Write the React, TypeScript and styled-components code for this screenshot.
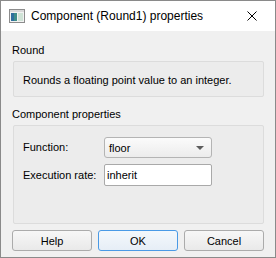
import React from 'react';
import styled, { createGlobalStyle } from 'styled-components';

const GlobalStyle = createGlobalStyle`
  html, body {
    margin: 0;
    padding: 0;
    background: #ffffff;
  }
  body {
    font-family: "Liberation Sans", Arial, sans-serif;
    font-size: 11px;
    color: #000;
  }
`;

const Window = styled.div`
  width: 276px;
  height: 258px;
  box-sizing: border-box;
  border: 1px solid #8a8a8a;
  background: #f0f0f0;
  display: flex;
  flex-direction: column;
`;

const TitleBar = styled.div`
  height: 30px;
  background: #ffffff;
  display: flex;
  align-items: center;
  padding-left: 8px;
  flex-shrink: 0;
`;

const Title = styled.span`
  margin-left: 6px;
  font-size: 12px;
  flex: 1;
`;

const CloseButton = styled.div`
  width: 46px;
  height: 30px;
  display: flex;
  align-items: center;
  justify-content: center;
`;

const Body = styled.div`
  flex: 1;
  padding: 11px;
  display: flex;
  flex-direction: column;
`;

const SectionLabel = styled.div<{ $gap?: number }>`
  height: 16px;
  line-height: 16px;
  margin-top: ${(p) => p.$gap ?? 0}px;
  margin-bottom: 3px;
`;

const GroupBox = styled.div<{ $height: number }>`
  box-sizing: border-box;
  margin-left: 1px;
  width: 251px;
  height: ${(p) => p.$height}px;
  border: 1px solid #dcdcdc;
  border-radius: 2px;
  background: #ececec;
`;

const Description = styled.div`
  padding: 10px 0 0 9px;
  line-height: 16px;
`;

const FormGrid = styled.div`
  display: grid;
  grid-template-columns: 81px 108px;
  row-gap: 6px;
  padding: 11px 0 0 9px;
  align-items: center;
`;

const FieldLabel = styled.span`
  line-height: 21px;
`;

const ComboBox = styled.div`
  box-sizing: border-box;
  height: 21px;
  border: 1px solid #b4b4b4;
  border-radius: 3px;
  background: linear-gradient(#fbfbfb, #ececec);
  display: flex;
  align-items: center;
  justify-content: space-between;
  padding: 0 7px 0 4px;
`;

const Arrow = styled.span`
  width: 0;
  height: 0;
  border-left: 4px solid transparent;
  border-right: 4px solid transparent;
  border-top: 4px solid #5c5c5c;
`;

const LineEdit = styled.input`
  box-sizing: border-box;
  height: 22px;
  width: 108px;
  border: 1px solid #a9a9a9;
  border-radius: 2px;
  background: #fff;
  padding: 0 2px;
  font: inherit;
  color: #000;
  outline: none;
`;

const ButtonRow = styled.div`
  display: flex;
  gap: 6px;
  margin-top: 6px;
`;

const Button = styled.button<{ $default?: boolean }>`
  box-sizing: border-box;
  width: 80px;
  height: 21px;
  border: 1px solid ${(p) => (p.$default ? '#4a9ae6' : '#ababab')};
  border-radius: 3px;
  background: ${(p) =>
    p.$default ? 'linear-gradient(#f4f8fc, #e6eef6)' : 'linear-gradient(#f7f7f7, #e9e9e9)'};
  font: inherit;
  color: #000;
  padding: 0;
`;

const AppIcon = () => (
  <svg width="16" height="14" viewBox="0 0 16 14">
    <rect x="0.5" y="0.5" width="15" height="13" fill="#f2f2f2" stroke="#8c8c8c" />
    <rect x="1" y="1" width="14" height="2" fill="#d8d8d8" />
    <rect x="2" y="4" width="6" height="8" fill="#3f8e8a" />
    <rect x="2" y="4" width="3" height="8" fill="#2e6f9e" />
    <rect x="9" y="4" width="5" height="8" fill="#cfe3d6" />
  </svg>
);

const CloseIcon = () => (
  <svg width="10" height="10" viewBox="0 0 10 10">
    <path d="M0.5 0.5 L9.5 9.5 M9.5 0.5 L0.5 9.5" stroke="#000" strokeWidth="1" />
  </svg>
);

export default function App() {
  return (
    <>
      <GlobalStyle />
      <Window>
        <TitleBar>
          <AppIcon />
          <Title>Component (Round1) properties</Title>
          <CloseButton>
            <CloseIcon />
          </CloseButton>
        </TitleBar>
        <Body>
          <SectionLabel>Round</SectionLabel>
          <GroupBox $height={36}>
            <Description>Rounds a floating point value to an integer.</Description>
          </GroupBox>
          <SectionLabel $gap={9}>Component properties</SectionLabel>
          <GroupBox $height={99}>
            <FormGrid>
              <FieldLabel>Function:</FieldLabel>
              <ComboBox>
                <span>floor</span>
                <Arrow />
              </ComboBox>
              <FieldLabel>Execution rate:</FieldLabel>
              <LineEdit defaultValue="inherit" />
            </FormGrid>
          </GroupBox>
          <ButtonRow>
            <Button>Help</Button>
            <Button $default>OK</Button>
            <Button>Cancel</Button>
          </ButtonRow>
        </Body>
      </Window>
    </>
  );
}
